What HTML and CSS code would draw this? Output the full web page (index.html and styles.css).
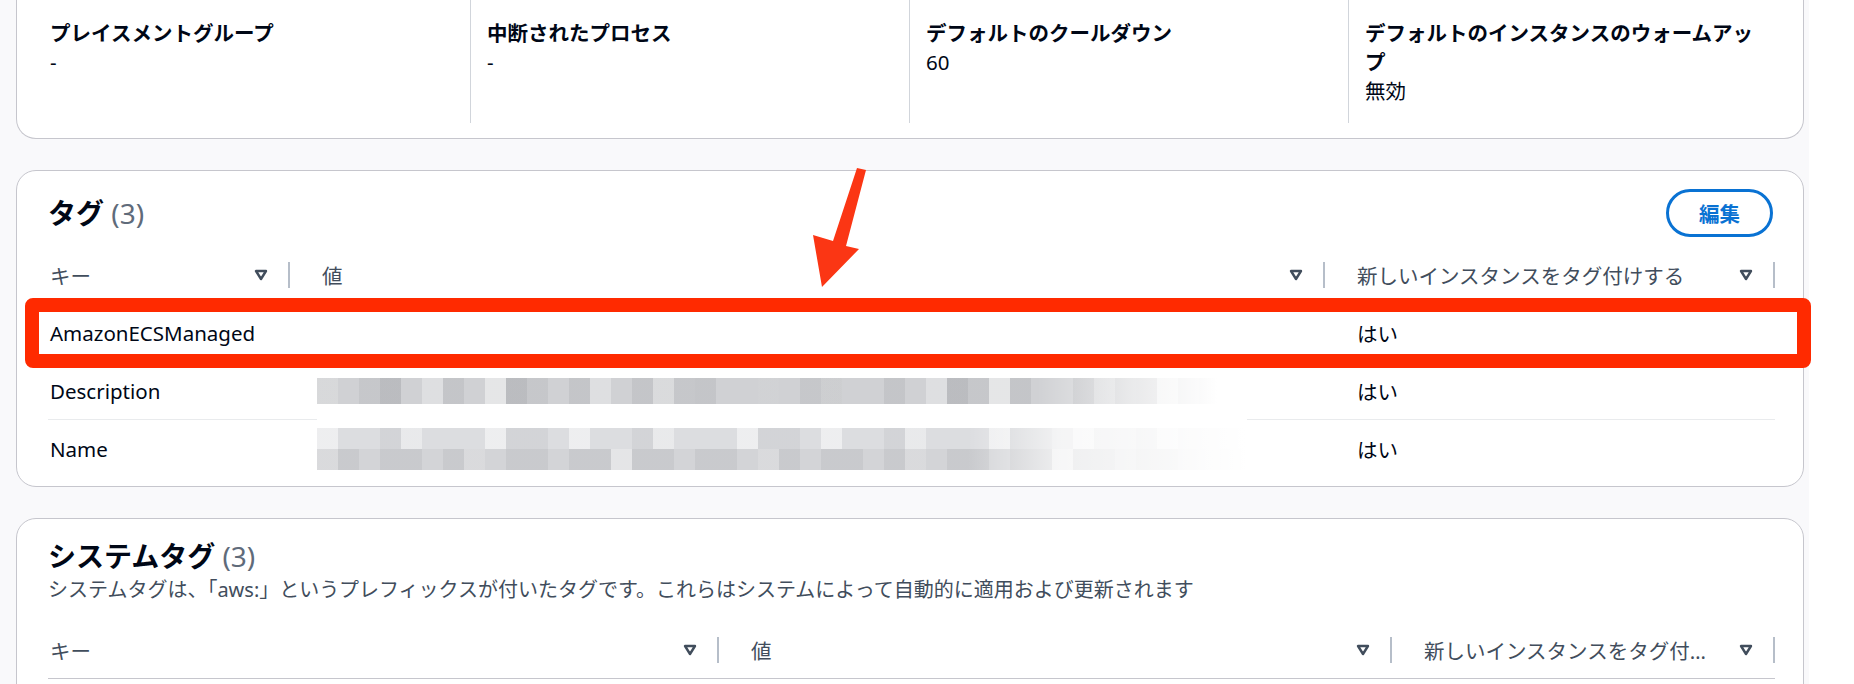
FILE: index.html
```html
<!DOCTYPE html>
<html lang="ja">
<head>
  <meta charset="UTF-8" />
  <meta name="viewport" content="width=device-width, initial-scale=1" />
  <title>Auto Scaling グループ - タグ</title>
  <link rel="stylesheet" href="styles.css">
</head>
<body>
  <div class="page">
    <main class="content">
      <!-- Group details (top is scrolled out of view) -->
      <section class="card card-cut">
        <div class="kv-grid">
          <div class="kv">
            <div class="kv-label">プレイスメントグループ</div>
            <div class="kv-value">-</div>
          </div>
          <div class="kv">
            <div class="kv-label">中断されたプロセス</div>
            <div class="kv-value">-</div>
          </div>
          <div class="kv">
            <div class="kv-label">デフォルトのクールダウン</div>
            <div class="kv-value">60</div>
          </div>
          <div class="kv">
            <div class="kv-label">デフォルトのインスタンスのウォームアップ</div>
            <div class="kv-value">無効</div>
          </div>
        </div>
      </section>

      <!-- Tags -->
      <section class="card tags-card">
        <header class="card-head">
          <h2>タグ <span class="count">(3)</span></h2>
          <button class="btn" type="button">編集</button>
        </header>
        <div class="tbl tbl-tags">
          <div class="tr th">
            <div class="cell"><span class="lbl">キー</span><svg class="sort" viewBox="0 0 14 12"><path d="M2 2h10l-5 8z"/></svg></div>
            <div class="cell"><span class="lbl">値</span><svg class="sort" viewBox="0 0 14 12"><path d="M2 2h10l-5 8z"/></svg></div>
            <div class="cell"><span class="lbl">新しいインスタンスをタグ付けする</span><svg class="sort" viewBox="0 0 14 12"><path d="M2 2h10l-5 8z"/></svg></div>
          </div>
          <div class="tr">
            <div class="cell">AmazonECSManaged</div>
            <div class="cell"></div>
            <div class="cell">はい</div>
          </div>
          <div class="tr">
            <div class="cell">Description</div>
            <div class="cell"><span class="mosaic mosaic-desc"></span></div>
            <div class="cell">はい</div>
          </div>
          <div class="tr">
            <div class="cell">Name</div>
            <div class="cell"><span class="mosaic mosaic-name"><span class="mrow mrow-a"></span><span class="mrow mrow-b"></span></span></div>
            <div class="cell">はい</div>
          </div>
        </div>
      </section>

      <!-- System tags -->
      <section class="card sys-card">
        <h2>システムタグ <span class="count">(3)</span></h2>
        <p class="desc">システムタグは、「aws:」というプレフィックスが付いたタグです。これらはシステムによって自動的に適用および更新されます</p>
        <div class="tbl tbl-sys">
          <div class="tr th">
            <div class="cell"><span class="lbl">キー</span><svg class="sort" viewBox="0 0 14 12"><path d="M2 2h10l-5 8z"/></svg></div>
            <div class="cell"><span class="lbl">値</span><svg class="sort" viewBox="0 0 14 12"><path d="M2 2h10l-5 8z"/></svg></div>
            <div class="cell"><span class="lbl">新しいインスタンスをタグ付けする</span><svg class="sort" viewBox="0 0 14 12"><path d="M2 2h10l-5 8z"/></svg></div>
          </div>
        </div>
      </section>
    </main>
    <div class="gutter"></div>

    <!-- Annotation: highlighted row and arrow -->
    <div class="highlight"></div>
    <svg class="arrow" viewBox="0 0 1854 684">
      <path d="M857 168 L866 170 L846 246 L859 249 L822 287 L813 235 L833 241 Z"/>
    </svg>
  </div>
</body>
</html>
```

FILE: styles.css
```css
/* Reset */
* {
  box-sizing: border-box;
  margin: 0;
  padding: 0;
}

html,
body {
  height: 100%;
  overflow: hidden;
}

body {
  font-family: "Noto Sans", "Noto Sans CJK JP", sans-serif;
  font-size: 20.5px;
  color: #000716;
  background: #fff;
}

.page {
  position: relative;
  display: flex;
  height: 684px;
}

.content {
  flex: 1;
  display: flex;
  flex-direction: column;
  gap: 31px;
  padding: 0 5px 0 16px;
  background: #f9f9fb;
  overflow: hidden;
}

.gutter {
  width: 45px;
  background: #fff;
}

/* Cards */
.card {
  flex-shrink: 0;
  background: #fff;
  border: 1px solid #c6c6cd;
  border-radius: 20px;
}

.card-cut {
  border-top: 0;
  border-radius: 0 0 20px 20px;
  padding: 0 16px 15px 33px;
}

.kv-grid {
  display: grid;
  grid-template-columns: 420fr 439fr 439fr 439fr;
}

.kv {
  padding: 19px 20px 17px 0;
  line-height: 29px;
}

.kv + .kv {
  border-left: 1px solid #d1d5db;
  padding-left: 16px;
}

.kv-label {
  font-weight: 700;
}

h2 {
  font-size: 28px;
  font-weight: 700;
  line-height: 40px;
}

.count {
  font-weight: 400;
  color: #5f6b7a;
}

.tags-card {
  padding: 18px 28px 8px 31px;
}

.card-head {
  display: flex;
  align-items: center;
  justify-content: space-between;
  height: 48px;
  margin-bottom: 9px;
}

.btn {
  width: 107px;
  height: 48px;
  margin-right: 2px;
  border: 3px solid #0972d3;
  border-radius: 24px;
  background: #fff;
  color: #0972d3;
  font: 700 20.5px "Noto Sans", "Noto Sans CJK JP", sans-serif;
}

/* continues below the visible area */
.sys-card {
  min-height: 260px;
  padding: 17px 28px 0 31px;
}

.desc {
  font-size: 20px;
  line-height: 28px;
  color: #414d5c;
  margin-bottom: 17px;
}

/* Tables */
.tr {
  display: grid;
  height: 58px;
}

.tbl-tags .tr {
  grid-template-columns: 242px 1035px 1fr;
}

.tbl-sys .tr {
  grid-template-columns: 671px 673px 1fr;
}

.cell {
  display: flex;
  align-items: center;
  min-width: 0;
  padding-left: 32px;
  border-bottom: 1px solid #e9ebed;
  white-space: nowrap;
}

.cell:first-child {
  padding-left: 2px;
}

.tbl-tags .tr:last-child .cell {
  border-bottom: 0;
}

.th .cell {
  position: relative;
  padding-right: 22px;
  color: #414d5c;
  border-bottom-color: #c6c6cd;
}

.th .cell::after {
  content: "";
  position: absolute;
  right: 0;
  top: 16px;
  width: 2px;
  height: 26px;
  background: #b6bec9;
}

.th .lbl {
  flex: 1;
  overflow: hidden;
  text-overflow: ellipsis;
}

.sort {
  flex-shrink: 0;
  width: 14px;
  height: 12px;
  margin-left: 16px;
}

.sort path {
  fill: none;
  stroke: #414d5c;
  stroke-width: 2.4;
  stroke-linejoin: round;
}

/* Pixelated (redacted) values */
.mosaic {
  display: block;
  margin-left: -5px;
}

.mosaic-desc {
  width: 900px;
  height: 26px;
  background:
    linear-gradient(90deg, rgba(255,255,255,0) 0 80%, rgba(255,255,255,.6) 90%, #fff 100%),
    repeating-linear-gradient(90deg, rgba(40,44,52,.07) 0 21px, transparent 21px 63px),
    repeating-linear-gradient(90deg, transparent 0 42px, rgba(40,44,52,.06) 42px 84px, transparent 84px 147px),
    repeating-linear-gradient(90deg, rgba(255,255,255,.45) 0 21px, transparent 21px 105px, rgba(255,255,255,.3) 105px 126px, transparent 126px 168px),
    #d0d1d4;
}

/* the blurred image also hides the row line above it */
.mosaic-name {
  width: 930px;
  box-shadow: 0 -10px 0 #fff;
}

.mrow {
  display: block;
  height: 21px;
}

.mrow-a {
  background:
    linear-gradient(90deg, rgba(255,255,255,0) 0 70%, rgba(255,255,255,.7) 80%, #fff 100%),
    repeating-linear-gradient(90deg, rgba(255,255,255,.5) 0 21px, transparent 21px 84px),
    repeating-linear-gradient(90deg, transparent 0 63px, rgba(40,44,52,.05) 63px 105px, transparent 105px 126px),
    #dcdde0;
}

.mrow-b {
  background:
    linear-gradient(90deg, rgba(255,255,255,0) 0 70%, rgba(255,255,255,.7) 80%, #fff 100%),
    repeating-linear-gradient(90deg, rgba(40,44,52,.06) 0 42px, transparent 42px 63px),
    repeating-linear-gradient(90deg, rgba(255,255,255,.4) 0 21px, transparent 21px 147px),
    #d3d4d7;
}

/* Annotation overlay */
.highlight {
  position: absolute;
  left: 25px;
  top: 298px;
  width: 1786px;
  height: 70px;
  border: 14px solid #ff2a00;
  border-radius: 8px;
}

.arrow {
  position: absolute;
  left: 0;
  top: 0;
  width: 1854px;
  height: 684px;
  pointer-events: none;
}

.arrow path {
  fill: #fb3614;
}
```
